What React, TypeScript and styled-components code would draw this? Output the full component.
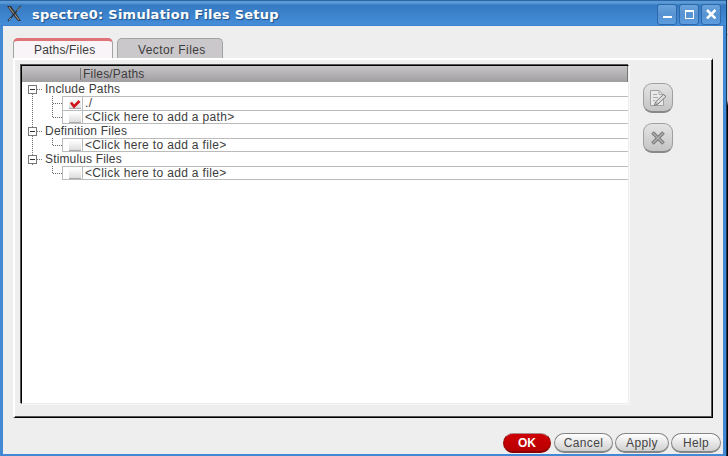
import React from "react";
import styled, { createGlobalStyle, css } from "styled-components";

const Global = createGlobalStyle`
  * { box-sizing: border-box; }
  html, body { margin: 0; padding: 0; overflow: hidden; }
  body { font: 12px "Liberation Sans", Arial, sans-serif; color: #3c3c3c; }
`;

const Desktop = styled.div`
  display: flex;
  width: 728px;
  height: 456px;
  background: linear-gradient(#d4d4d4 0 34px, #a4a8ac 34px 35px, #d0d4d8 35px 100px, #000 106px);
`;

const Window = styled.div`
  display: flex;
  flex-direction: column;
  width: 727px;
  height: 456px;
  border-right: 1px solid #17385c;
  background: #4288d3;
`;

const TitleBar = styled.header`
  display: flex;
  align-items: center;
  height: 26px;
  flex: none;
  padding: 1px 5px 0 7px;
  border-top: 1px solid #2a65a5;
  background: linear-gradient(#5b9ad6 0, #5b9ad6 2px, #3479c1 4px, #3c82cb 12px, #458dd9 24px, #3276bd 25px);
`;

const Title = styled.h1`
  flex: 1;
  margin: 2px 0 0 9px;
  color: #fff;
  font: bold 13px/18px "DejaVu Sans", sans-serif;
  letter-spacing: 0.25px;
  white-space: nowrap;
  text-shadow: 1px 1px 1px #1d4f88;
`;

const WindowControls = styled.div`
  display: flex;
  gap: 2px;
`;

const ControlButton = styled.button`
  display: grid;
  place-items: center;
  width: 20px;
  height: 21px;
  padding: 0;
  border: 1px solid #2c68aa;
  border-radius: 3px;
  background: linear-gradient(#6aa3dc, #5793d2 50%, #5c9cdf);
`;

const Content = styled.main`
  display: flex;
  flex-direction: column;
  width: 720px;
  height: 428px;
  margin-left: 3px;
  padding: 12px 10px 0;
  background: #eee;
`;

const Tabs = styled.div`
  display: flex;
  gap: 4px;
  height: 20px;
`;

const Tab = styled.button<{ $active?: boolean }>`
  width: ${p => (p.$active ? 100 : 106)}px;
  height: 20px;
  padding: 2px 0 0 20px;
  border: 1px solid #a0a4a0;
  border-bottom: 0;
  border-radius: 5px 5px 0 0;
  background: #cbc8cb;
  color: #3c3c3c;
  font: inherit;
  text-align: left;
  ${p => p.$active && css`
    border-top: 3px solid #df7478;
    padding-top: 0;
    background: #f8f4f8;
  `}
`;

const Panel = styled.section`
  display: flex;
  width: 700px;
  height: 360px;
  padding: 4px 0 0 5px;
  border: solid;
  border-width: 2px 1px 1px 2px;
  border-color: #fff #000 #000 #fff;
  box-shadow: inset -1px -1px #555;
`;

const FileList = styled.div`
  flex: none;
  width: 608px;
  height: 339px;
  margin: 1px;
  border: 1px solid;
  border-color: #000 #eee #eee #000;
  box-shadow: -1px -1px #555, 1px 1px #f8f8f8;
  background: #fff;
`;

const ListHeader = styled.div`
  display: flex;
  height: 16px;
  border-right: 1px solid #777;
  background: linear-gradient(#c8c5c8, #a19ea1);
`;

const HeaderCell = styled.div<{ $width?: number }>`
  width: ${p => (p.$width ? `${p.$width}px` : "auto")};
  margin: 2px 0;
  padding-left: 2px;
  border-right: ${p => (p.$width ? "1px solid #777" : "0")};
  line-height: 13px;
`;

const Row = styled.div`
  display: flex;
  height: 14px;
`;

const GroupLabel = styled.span`
  padding-left: 3px;
  line-height: 14px;
`;

const Entry = styled.div<{ $last: boolean }>`
  display: flex;
  width: 566px;
  height: 14px;
  border-left: 1px solid #bbb;
  border-top: 1px solid #bbb;
  border-bottom: ${p => (p.$last ? "1px solid #bbb" : "0")};
`;

const CheckCell = styled.div`
  display: flex;
  justify-content: flex-end;
  width: 20px;
  padding: 1px 1px 0 0;
  border-right: 1px solid #bbb;
`;

const CheckBox = styled.div`
  width: 12px;
  height: 11px;
  border-bottom: 1px solid #aaa;
  background: linear-gradient(#fff, #ddd);
`;

const EntryText = styled.span`
  padding-left: 2px;
  line-height: 12px;
`;

const Text = styled.span<{ $spacing: number }>`
  letter-spacing: ${p => p.$spacing}px;
  white-space: nowrap;
`;

const Tools = styled.aside`
  display: flex;
  flex-direction: column;
  gap: 10px;
  padding: 19px 0 0 13px;
`;

const ToolButton = styled.button`
  display: grid;
  place-items: center;
  width: 30px;
  height: 30px;
  padding: 0;
  border: 1px solid #a0a0a0;
  border-bottom: 2px solid #888;
  border-radius: 9px;
  background: linear-gradient(#e4e4e4, #c4c4c4);
`;

const Actions = styled.footer`
  display: flex;
  justify-content: flex-end;
  gap: 2px;
  margin: 15px -8px 0 0;
`;

const Action = styled.button<{ $width: number; $primary?: boolean }>`
  width: ${p => p.$width}px;
  height: 20px;
  padding: 1px 0 0;
  border: 1px solid #858585;
  border-bottom-width: 2px;
  border-radius: 10px;
  background: linear-gradient(#fff, #d0d0d0);
  color: #444;
  font: inherit;
  ${p => p.$primary && css`
    margin-right: 1px;
    border-color: #a88 #900 #800;
    background: linear-gradient(#ce0006, #b90000);
    color: #fff;
    font-weight: bold;
  `}
`;

type GroupData = { name: string; spacing: number; entries: { label: string; spacing: number; checked?: boolean }[] };

const groups: GroupData[] = [
  { name: "Include Paths", spacing: 0.2, entries: [
    { label: "./", spacing: 0.5, checked: true },
    { label: "<Click here to add a path>", spacing: 0.34 },
  ] },
  { name: "Definition Files", spacing: 0.22, entries: [{ label: "<Click here to add a file>", spacing: 0.34 }] },
  { name: "Stimulus Files", spacing: 0.15, entries: [{ label: "<Click here to add a file>", spacing: 0.34 }] },
];

const GroupBranch = ({ first }: { first: boolean }) => (
  <svg width="20" height="14" shapeRendering="crispEdges">
    <path d={`${first ? "" : "M10.5 0V3"}M10.5 12V14M15 7.5H20`} stroke="#777" strokeDasharray="1 1" />
    <rect x="6.5" y="3.5" width="8" height="8" fill="#fff" stroke="#777" />
    <path d="M8 7.5H13" stroke="#333" />
  </svg>
);

const EntryBranch = ({ continues, more }: { continues: boolean; more: boolean }) => (
  <svg width="40" height="14" shapeRendering="crispEdges">
    <path d={`${continues ? "M10.5 0V14" : ""}M30.5 0V${more ? 14 : 7}M31 7.5H40`} fill="none" stroke="#666" strokeDasharray="1 1" />
  </svg>
);

const AppIcon = () => (
  <svg width="16" height="18" viewBox="0 0 16 18">
    <path d="M0 1H4L9 8L14 16H11L6 10Z" fill="#343434" />
    <path d="M2 2L7 8.500L12 15" fill="none" stroke="#9b9186" strokeWidth="1.200" />
    <path d="M14 1L8 8L1 16" fill="none" stroke="#303945" strokeWidth="1.800" />
    <path d="M14 1.500L10 6M4 13L2 15" stroke="#aaa6a0" strokeWidth=".8" />
  </svg>
);

const EditIcon = () => (
  <svg width="18" height="18" viewBox="0 0 18 18" fill="none">
    <path d="M1.500 1.500H10L14.500 6V16.500H1.500Z" fill="#e9e9e9" stroke="#a0a0a0" />
    <path d="M10 1.500V5.500H14M4 5.500H8M4 8.500H9M4 11.500H6" stroke="#aaa" />
    <path d="M5.500 16.500L6.500 13L14.500 5.500L17 7.500L9 15Z" fill="#ddd" stroke="#777" />
    <path d="M6.500 13L9 15" stroke="#999" />
  </svg>
);

export default function App() {
  return (
    <>
      <Global />
      <Desktop>
        <Window>
          <TitleBar>
            <AppIcon />
            <Title>spectre0: Simulation Files Setup</Title>
            <WindowControls>
              <ControlButton aria-label="Minimize">
                <svg width="10" height="10"><path d="M1 8H10" stroke="#fff" strokeWidth="2" /></svg>
              </ControlButton>
              <ControlButton aria-label="Maximize">
                <svg width="10" height="10" shapeRendering="crispEdges"><path d="M1.5 1V9.5H9.5V1" fill="none" stroke="#fff" /><path d="M1 2H10" stroke="#fff" strokeWidth="2" /></svg>
              </ControlButton>
              <ControlButton aria-label="Close">
                <svg width="10" height="10"><path d="M1 1L9.500 9.500M9.500 1L1 9.500" stroke="#fff" strokeWidth="2.500" /></svg>
              </ControlButton>
            </WindowControls>
          </TitleBar>
          <Content>
            <Tabs>
              <Tab $active><Text $spacing={0.18}>Paths/Files</Text></Tab>
              <Tab><Text $spacing={0.42}>Vector Files</Text></Tab>
            </Tabs>
            <Panel>
              <FileList>
                <ListHeader>
                  <HeaderCell $width={59} />
                  <HeaderCell><Text $spacing={0.2}>Files/Paths</Text></HeaderCell>
                </ListHeader>
                {groups.map((group, g) => (
                  <React.Fragment key={group.name}>
                    <Row>
                      <GroupBranch first={g === 0} />
                      <GroupLabel><Text $spacing={group.spacing}>{group.name}</Text></GroupLabel>
                    </Row>
                    {group.entries.map((entry, i) => {
                      const last = i === group.entries.length - 1;
                      return (
                        <Row key={entry.label}>
                          <EntryBranch continues={g < groups.length - 1} more={!last} />
                          <Entry $last={last}>
                            <CheckCell>
                              <CheckBox>
                                {entry.checked && (
                                  <svg width="12" height="10" viewBox="0 0 12 10"><path d="M2 3.500L5 7.500L10.500 2" fill="none" stroke="#cf1118" strokeWidth="2.500" /></svg>
                                )}
                              </CheckBox>
                            </CheckCell>
                            <EntryText><Text $spacing={entry.spacing}>{entry.label}</Text></EntryText>
                          </Entry>
                        </Row>
                      );
                    })}
                  </React.Fragment>
                ))}
              </FileList>
              <Tools>
                <ToolButton aria-label="Edit"><EditIcon /></ToolButton>
                <ToolButton aria-label="Delete">
                  <svg width="14" height="14"><path d="M1.500 1.500L12.500 12.500M12.500 1.500L1.500 12.500" stroke="#777" strokeWidth="3.600" /><path d="M2 2L12 12M12 2L2 12" stroke="#b0b0b0" strokeWidth="1.500" /></svg>
                </ToolButton>
              </Tools>
            </Panel>
            <Actions>
              <Action $width={48} $primary>OK</Action>
              <Action $width={59}><Text $spacing={0.35}>Cancel</Text></Action>
              <Action $width={54}><Text $spacing={0.35}>Apply</Text></Action>
              <Action $width={50}><Text $spacing={0.35}>Help</Text></Action>
            </Actions>
          </Content>
        </Window>
      </Desktop>
    </>
  );
}
